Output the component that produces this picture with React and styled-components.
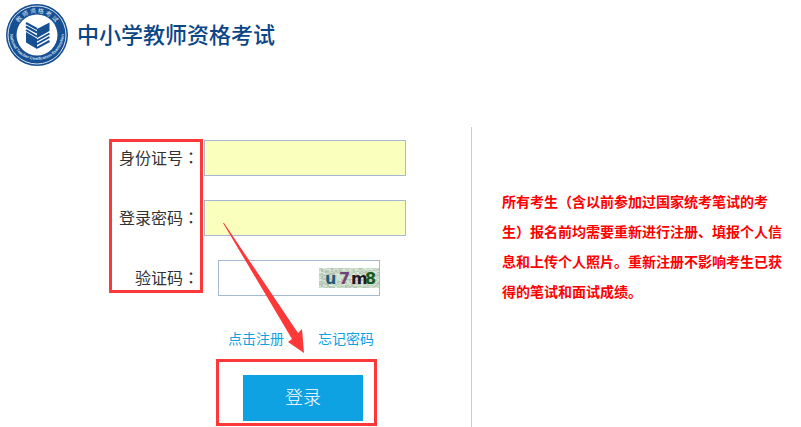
import React from "react";
import styled, { createGlobalStyle } from "styled-components";

const GlobalStyle = createGlobalStyle`
  * { box-sizing: border-box; }
  body {
    margin: 0;
    background: #fff;
    color: #333;
    font-family: "Noto Sans CJK SC", sans-serif;
    font-size: 16px;
  }
`;

const RED = "#fc3838";
const BLUE = "#0fa2e3";
const NAVY = "#164f92";

const Page = styled.div`
  min-height: 100vh;
  display: flex;
  flex-direction: column;
`;

const Header = styled.header`
  display: flex;
  align-items: center;
  gap: 9px;
  padding: 4px 6px 0;
  margin-bottom: 61px;
`;

const Title = styled.h1`
  margin: 0;
  padding-bottom: 5px;
  color: #0b4687;
  font-size: 22px;
  line-height: 30px;
  font-weight: 500;
`;

const Main = styled.main`
  flex: 1;
  display: grid;
  grid-template-columns: 471px minmax(0, 1fr);
`;

const Form = styled.form`
  position: relative;
  padding: 13px 65px 0 109px;
`;

const Row = styled.div`
  display: flex;
  align-items: center;
  gap: ${(p) => (p.$inset ? "19px" : "5px")};
  height: 36px;
  margin-bottom: 24px;
`;

const Label = styled.label`
  width: 90px;
  padding-bottom: 2px;
  text-align: right;
  line-height: 24px;
  white-space: nowrap;
`;

const Colon = styled.span`
  font-family: "Noto Sans CJK TC", sans-serif;
`;

const Input = styled.input`
  width: 202px;
  height: 36px;
  padding: 0 8px;
  border: 1px solid #a5bad0;
  border-radius: 0;
  background: #faffbd;
  font: inherit;
  outline: none;
`;

const CodeBox = styled.div`
  display: flex;
  align-items: center;
  width: 162px;
  height: 36px;
  border: 1px solid #a5bad0;
`;

const CodeInput = styled.input`
  flex: 1;
  min-width: 0;
  height: 34px;
  padding: 0 8px;
  border: 0;
  background: transparent;
  font: inherit;
  outline: none;
`;

const CaptchaImage = styled.svg`
  display: block;
  overflow: visible;
`;

const Links = styled.nav`
  display: flex;
  gap: 34px;
  padding-left: 119px;
  margin: 31px 0 10px;
`;

const TextLink = styled.a`
  color: ${BLUE};
  font-size: 14px;
  line-height: 22px;
  text-decoration: none;
`;

const SubmitFrame = styled.div`
  width: 161px;
  margin-left: 107px;
  padding: 13px 11px 2px 24px;
  border: 3px solid ${RED};
`;

const Submit = styled.button`
  display: block;
  width: 100%;
  height: 46px;
  padding: 0 0 4px;
  border: 0;
  background: ${BLUE};
  color: #fff;
  font-family: inherit;
  font-size: 18px;
  font-weight: 300;
`;

const LabelHighlight = styled.div`
  position: absolute;
  left: 109px;
  top: 12px;
  width: 94px;
  height: 154px;
  border: 3px solid ${RED};
  pointer-events: none;
`;

const Arrow = styled.svg`
  position: absolute;
  left: 222px;
  top: 95px;
  pointer-events: none;
`;

const Notice = styled.aside`
  padding: 59px 19px 0 30px;
  border-left: 1px solid #ccc;
`;

const NoticeText = styled.p`
  margin: 0;
  max-width: 281px;
  color: #f00;
  font-size: 14px;
  line-height: 30px;
  font-weight: 700;
  text-spacing-trim: space-all;
`;

function Logo() {
  return (
    <svg width="62" height="62" viewBox="0 0 62 62" aria-hidden="true">
      <defs>
        <path id="ringTop" d="M9 31a22 22 0 0 1 44 0" />
        <path id="ringBottom" d="M4 29a27 27 0 0 0 54 0" />
      </defs>
      <circle cx="31" cy="31" r="31" fill={NAVY} />
      <circle cx="31" cy="31" r="29" fill="none" stroke="#d5e2f0" strokeWidth="1" />
      <circle cx="31" cy="31" r="20.5" fill="#fff" />
      <text fill="#dbe6f2" fontSize="6" fontFamily="Noto Sans CJK SC" textAnchor="middle">
        <textPath href="#ringTop" startOffset="50%">教 师 资 格 考 试</textPath>
      </text>
      <text fill="#dbe6f2" fontSize="4" fontWeight="700" fontFamily="Liberation Sans" textAnchor="middle">
        <textPath href="#ringBottom" startOffset="50%">National Teacher Certification Examination</textPath>
      </text>
      <g fill={NAVY}>
        <path d="M31 25L43.500 18.500V27L31 34Z" />
        <path d="M20 28L31 34.500V45L20 38.500Z" />
      </g>
      <g stroke={NAVY} strokeWidth="2">
        <path d="M20 19L31 25M20 22.500L31 28.500M20 26L31 32.500" />
        <path d="M31 36.500L43.500 29.500M31 40L43.500 33M31 43.800L43.500 37" />
      </g>
    </svg>
  );
}

const NOISE_COLORS = ["#a9bda5", "#e3f2df", "#b9b6b9", "#cfdccb", "#b2d9bd", "#d9cfcb", "#c3e5c7"];

const NOISE = Array.from({ length: 600 }, (_, i) => {
  const n = Math.abs(Math.sin(i * 12.9898 + 4.1) * 43758.5453);
  return {
    x: (i % 30) * 2,
    y: Math.floor(i / 30),
    fill: NOISE_COLORS[Math.floor((n % 1) * NOISE_COLORS.length)],
  };
});

function Captcha() {
  return (
    <CaptchaImage width="60" height="20" viewBox="0 0 60 20" role="img" aria-label="验证码图片">
      <rect width="60" height="20" fill="#c9dec8" />
      {NOISE.map((n, i) => (
        <rect key={i} x={n.x} y={n.y} width="2" height="1" fill={n.fill} opacity="0.7" />
      ))}
      <g fontFamily="DejaVu Sans" fontWeight="700" fontSize="16">
        <text x="6" y="16" fill="#1f5a7c">u</text>
        <text x="20" y="16" fill="#704278">7</text>
        <text x="32" y="16" fill="#211626">m</text>
        <text x="46" y="16" fill="#185820">8</text>
      </g>
    </CaptchaImage>
  );
}

export default function App() {
  return (
    <Page>
      <GlobalStyle />
      <Header>
        <Logo />
        <Title>中小学教师资格考试</Title>
      </Header>
      <Main>
        <Form onSubmit={(e) => e.preventDefault()}>
          <Row>
            <Label htmlFor="idcard">身份证号<Colon lang="zh-TW">：</Colon></Label>
            <Input id="idcard" type="text" />
          </Row>
          <Row>
            <Label htmlFor="password">登录密码<Colon lang="zh-TW">：</Colon></Label>
            <Input id="password" type="password" />
          </Row>
          <Row $inset>
            <Label htmlFor="code">验证码<Colon lang="zh-TW">：</Colon></Label>
            <CodeBox>
              <CodeInput id="code" type="text" />
              <Captcha />
            </CodeBox>
          </Row>
          <Links>
            <TextLink href="#register">点击注册</TextLink>
            <TextLink href="#forgot">忘记密码</TextLink>
          </Links>
          <SubmitFrame>
            <Submit type="submit">登录</Submit>
          </SubmitFrame>
          <LabelHighlight />
          <Arrow width="84" height="134" viewBox="0 0 84 134" aria-hidden="true">
            <path d="M1 1L2 1 76 111 80 107 82 131 66 120 70 117Z" fill={RED} />
          </Arrow>
        </Form>
        <Notice>
          <NoticeText>
            所有考生（含以前参加过国家统考笔试的考生）报名前均需要重新进行注册、填报个人信息和上传个人照片。重新注册不影响考生已获得的笔试和面试成绩。
          </NoticeText>
        </Notice>
      </Main>
    </Page>
  );
}
